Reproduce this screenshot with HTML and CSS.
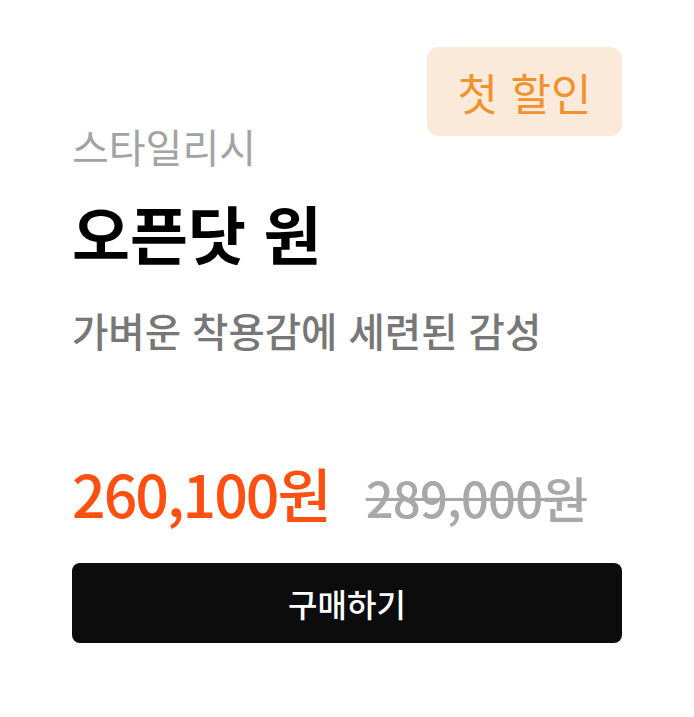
FILE: index.html
```html
<!DOCTYPE html>
<html lang="ko">
<head>
<meta charset="utf-8">
<link rel="stylesheet" href="styles.css">
</head>
<body>
<div class="card">
  <span class="badge">첫 할인</span>
  <div class="category">스타일리시</div>
  <h1 class="title">오픈닷 원</h1>
  <p class="desc">가벼운 착용감에 세련된 감성</p>
  <div class="prices">
    <span class="price">260,100원</span>
    <span class="orig">289,000원</span>
  </div>
  <button class="buy">구매하기</button>
</div>
</body>
</html>
```
FILE: styles.css
```css
* { box-sizing: border-box; }
html, body { margin: 0; padding: 0; background: #fff; }
body { font-family: "Noto Sans CJK KR", "Noto Sans", sans-serif; }
.card {
  position: relative;
  width: 694px;
  height: 717px;
  padding: 120px 72px 0 72px;
  display: flex;
  flex-direction: column;
}
.badge {
  position: absolute;
  top: 47px;
  right: 72px;
  width: 195px;
  height: 89px;
  border-radius: 12px;
  background: #fbead9;
  color: #f2922e;
  font-size: 44px;
  font-weight: 400;
  display: flex;
  align-items: center;
  justify-content: center;
}
.category {
  font-size: 40px;
  line-height: 52px;
  color: #a3a3a3;
}
.title {
  margin: 20px 0 0;
  font-size: 63px;
  font-weight: 700;
  line-height: 80px;
  color: #000;
}
.desc {
  margin: 30px 0 0;
  font-size: 39.5px;
  font-weight: 500;
  line-height: 56px;
  color: #777;
}
.prices {
  margin-top: 99px;
  display: flex;
  align-items: baseline;
  gap: 36px;
}
.price {
  font-size: 59px;
  font-weight: 500;
  line-height: 72px;
  letter-spacing: -2px;
  color: #ff5012;
}
.orig {
  font-size: 49px;
  font-weight: 500;
  letter-spacing: -0.8px;
  color: #a8a8a8;
  text-decoration: line-through;
  text-decoration-thickness: 3px;
}
.buy {
  margin-top: 31px;
  height: 80px;
  width: 100%;
  border: 0;
  border-radius: 8px;
  background: #0c0c0c;
  color: #fff;
  font-family: inherit;
  font-size: 32px;
  font-weight: 500;
}
```
